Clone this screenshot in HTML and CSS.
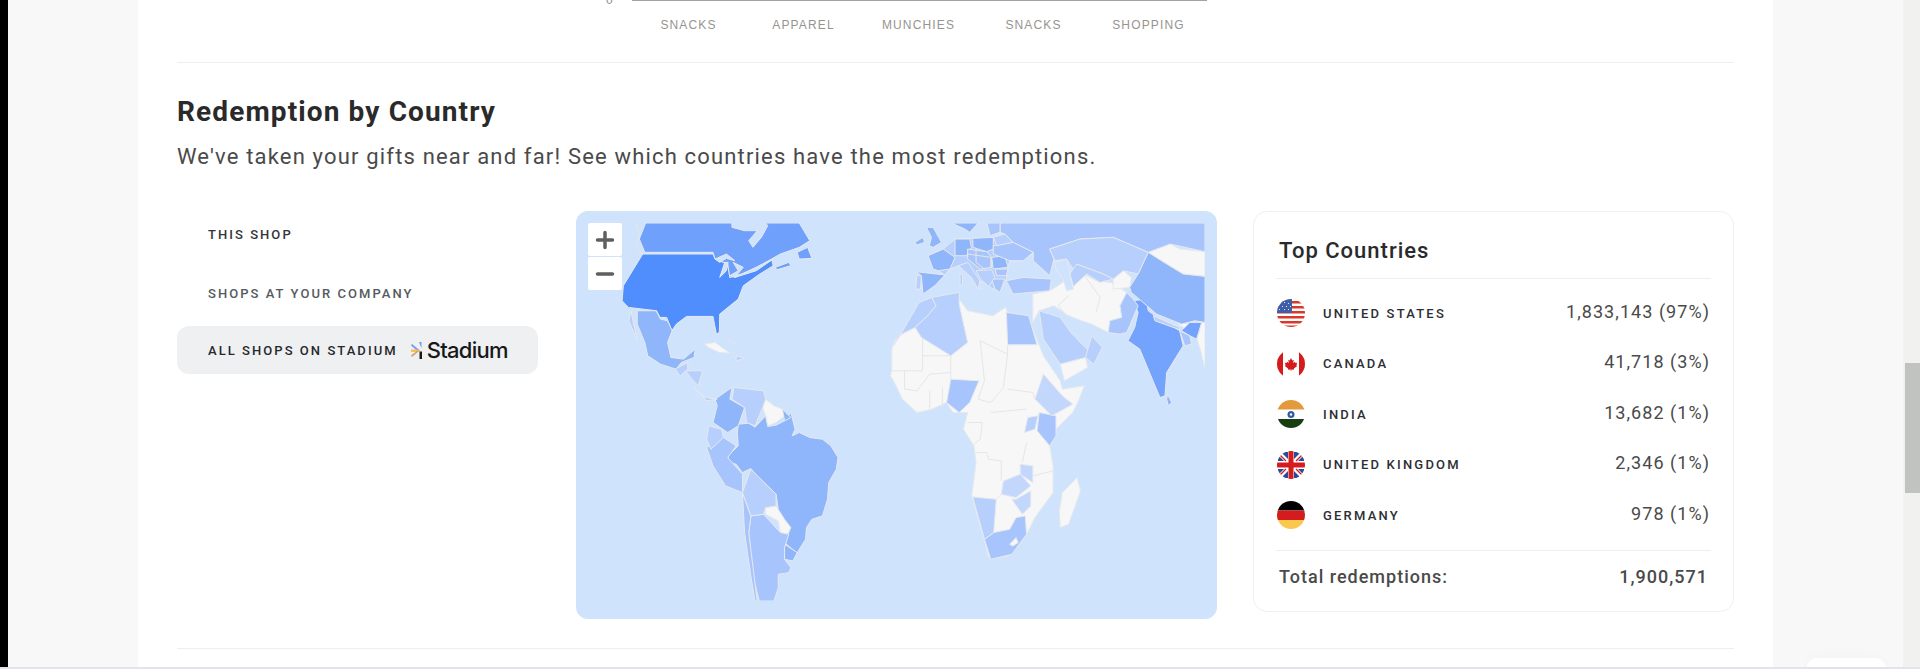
FILE: index.html
```html
<!DOCTYPE html>
<html lang="en">
<head>
<meta charset="utf-8">
<title>Redemption by Country</title>
<link rel="stylesheet" href="styles.css">
</head>
<body>
<div class="edge"></div>
<div class="gutter-left"></div>
<main class="card">
  <section class="chart">
    <div class="axis-row"><span class="zero">0</span><div class="axis"></div></div>
    <div class="ticks"><span>SNACKS</span><span>APPAREL</span><span>MUNCHIES</span><span>SNACKS</span><span>SHOPPING</span></div>
  </section>
  <section class="country">
    <h2 class="title">Redemption by Country</h2>
    <p class="sub">We've taken your gifts near and far! See which countries have the most redemptions.</p>
    <div class="cols">
      <nav class="tabs">
        <div class="tab tab-dark">THIS SHOP</div>
        <div class="tab">SHOPS AT YOUR COMPANY</div>
        <div class="tab tab-active"><span>ALL SHOPS ON STADIUM</span>
          <span class="logo"><svg class="logo-mark" viewBox="0 0 11 17"><path d="M8 0h2.500v6.500z" fill="#6f9cf5"/><path d="M1 2l8 6.500-1.600 1.200L0 3.500z" fill="#6f9cf5"/><path d="M0 7.500h8.500v2.400H0z" fill="#f4bd55"/><path d="M7.500 9.500L1 15l-1-1.500 6.500-5z" fill="#d99a72"/><path d="M8.500 9.500H11V17H8.500z" fill="#1a1a1a"/></svg><span class="logo-text">Stadium</span></span>
        </div>
      </nav>
      <div class="map-panel">
        <svg class="map" viewBox="43 72 1466 1133" preserveAspectRatio="none">
          <g class="nd">
            <polygon points="765,450 772,425 790,405 820,385 835,350 870,320 925,300 945,335 1005,350 1035,325 1040,340 1090,360 1100,390 1125,470 1165,545 1170,570 1222,560 1210,600 1195,640 1155,690 1140,740 1148,800 1148,880 1105,955 1085,1005 1040,1070 995,1075 985,1020 975,980 955,890 958,860 965,790 960,740 935,690 945,640 910,640 895,610 860,630 825,640 790,600 775,560 762,530 765,510"/>
            <polygon points="1100,285 1140,275 1160,260 1190,232 1220,225 1250,245 1285,250 1323,280 1307,320 1311,355 1283,365 1279,400 1240,375 1215,365 1185,350 1150,320 1115,335 1100,370"/>
            <polygon points="1291,240 1315,215 1334,235 1330,265 1291,270"/>
            <polygon points="1374,160 1426,135 1450,150 1509,158 1509,232 1457,225 1418,195"/>
            <polygon points="1490,420 1501,370 1509,370 1509,510 1500,460"/>
            <polygon points="1165,495 1225,475 1230,505 1175,545"/>
            <polygon points="465,600 485,620 505,630 510,650 490,670 470,680 465,650 458,625"/>
            <polygon points="465,925 490,920 510,960 525,985 520,1005 500,1000 495,965 465,945"/>
            <polygon points="1205,835 1213,875 1185,975 1165,985 1163,935 1170,880"/>
            <polygon points="320,435 345,430 380,462 355,460 330,445"/>
            <polygon points="1443,375 1470,372 1462,388"/>
          </g>
          <g class="lines">
            <polyline points="765,515 838,515 838,390"/>
            <polyline points="838,470 905,470 905,540"/>
            <polyline points="975,425 1040,465 1040,440"/>
            <polyline points="975,425 985,545 970,600 1000,610 1030,565 1040,465"/>
            <polyline points="1040,570 1100,580 1105,600"/>
            <polyline points="1000,640 1085,630"/>
            <polyline points="945,670 980,670 975,720 955,740"/>
            <polyline points="960,760 990,760 995,780 1025,785 1025,845"/>
            <polyline points="795,515 795,570 825,575 855,525 905,520"/>
            <polyline points="855,575 855,635"/>
            <polyline points="885,565 885,620"/>
            <polyline points="1085,730 1075,790"/>
            <polyline points="1100,830 1148,815"/>
            <polyline points="1013,900 1025,885"/>
            <polyline points="1180,350 1160,320 1185,290"/>
            <polyline points="1220,225 1260,295 1250,340"/>
          </g>
          <polygon class="c-lt" points="851,170 887,150 915,120 1006,115 1053,130 1101,160 1077,185 1045,185 1041,205 1037,240 1022,280 1000,265 975,245 974,270 954,235 923,200 903,210 891,228 875,215"/>
          <polygon class="c-us" points="173,165 127,260 124,305 139,325 206,335 214,355 230,355 242,395 253,375 277,352 340,352 348,405 355,400 356,345 400,300 412,260 451,225 483,200 479,180 443,205 408,225 380,235 375,195 345,180 340,165"/>
          <g class="c-ca">
            <polygon points="180,72 385,72 385,85 415,95 445,95 425,125 435,145 455,115 470,80 465,72 545,72 570,125 545,145 500,165 479,180 443,205 408,225 380,235 375,195 345,180 340,160 178,160 165,120"/>
            <polygon points="540,160 565,145 575,178 545,180"/>
            <polygon points="488,205 520,190 525,200 492,212"/>
          </g>
          <g class="c-in">
            <polygon points="1338,305 1370,300 1374,335 1390,350 1449,395 1457,440 1418,520 1414,590 1402,595 1354,450 1326,425 1342,385 1350,340"/>
            <polygon points="1473,370 1501,370 1489,420 1473,410 1453,395"/>
          </g>
          <g class="c-br">
            <polygon points="400,675 425,672 440,684 465,650 470,682 490,678 510,665 525,640 535,690 528,710 545,700 570,715 600,720 620,740 637,775 633,810 615,850 612,900 600,950 575,960 562,985 560,1020 545,1050 540,1062 510,1030 525,985 510,960 495,930 490,885 470,860 450,840 430,808 410,820 395,795 378,790 375,770 400,740 398,700"/>
            <polygon points="385,565 380,600 415,625 400,680 375,700 340,670 350,620 345,600"/>
            <polygon points="505,630 525,655 510,665"/>
            <polygon points="160,335 205,335 215,360 232,365 243,395 232,430 240,475 270,480 298,450 295,475 265,490 252,510 215,495 185,470 178,430 160,375"/>
            <polygon points="1374,160 1418,195 1457,225 1509,232 1509,370 1485,365 1453,375 1394,345 1334,280 1330,265 1350,225"/>
            <polygon points="510,1035 540,1060 530,1085 510,1080"/>
            <polygon points="1420,585 1430,610 1422,620 1418,600"/>
            <polygon points="847,85 863,85 883,130 863,145 854,140 859,115"/>
            <polygon points="851,170 887,150 915,175 903,210 875,215 863,210"/>
            <polygon points="915,120 950,120 954,145 942,170 915,170"/>
            <polygon points="957,118 1006,115 1006,150 990,158 958,145"/>
            <polygon points="824,218 891,228 867,260 839,285 835,230"/>
            <polygon points="1002,175 1033,170 1041,205 1006,210"/>
            <polygon points="820,130 839,115 843,130 824,138"/>
            <polygon points="907,72 970,72 950,100 938,90"/>
          </g>
          <g class="c-mid">
            <polygon points="1022,72 1509,72 1509,158 1426,135 1374,160 1291,115 1212,120 1140,150 1150,180 1140,230 1101,185 1101,160 1053,130 1033,105 1022,100"/>
            <polygon points="1037,245 1077,235 1144,240 1140,275 1053,285"/>
            <polygon points="325,745 365,715 395,740 375,775 410,825 410,880 370,860 340,800"/>
            <polygon points="430,950 460,945 500,1000 520,1005 510,1045 510,1080 525,1105 520,1120 495,1125 495,1165 485,1205 450,1205 435,1130 425,1000"/>
            <polygon points="410,880 430,950 425,1000 445,1205 440,1205 430,1130 415,1000"/>
            <polygon points="1007,1000 1045,990 1060,955 1082,950 1085,1005 1050,1065 1000,1080 985,1020"/>
            <polygon points="1323,280 1338,300 1350,320 1330,380 1323,400 1307,405 1279,400 1283,365 1311,355 1307,320"/>
            <polygon points="1037,340 1090,350 1110,437 1040,437"/>
            <polygon points="905,540 972,545 950,610 925,640 895,610"/>
            <polygon points="1115,640 1155,650 1155,710 1140,740 1110,695"/>
            <polygon points="1449,395 1473,410 1477,435 1461,440"/>
            <polygon points="1006,140 1053,130 1101,160 1077,185 1045,185 1006,165"/>
            <polygon points="1010,210 1041,210 1037,230 1014,230"/>
            <polygon points="945,150 990,158 1002,175 1002,205 975,210 945,180"/>
            <polygon points="1002,240 1033,240 1022,280 1010,270"/>
            <polygon points="991,72 1022,72 1022,100 998,110"/>
          </g>
          <g class="c-lt">
            <polygon points="390,565 460,575 465,600 458,625 440,680 420,670 415,625 385,600"/>
            <polygon points="330,680 360,690 365,715 335,750 325,720"/>
            <polygon points="430,810 470,860 490,885 490,920 465,925 460,945 430,950 410,880"/>
            <polygon points="770,440 830,310 860,295 870,320 850,350 820,385 780,410"/>
            <polygon points="820,385 850,350 870,320 860,295 925,280 925,315 945,430 905,470 835,415"/>
            <polygon points="1115,335 1165,355 1190,400 1240,465 1225,475 1165,495 1125,420"/>
            <polygon points="1240,410 1265,445 1245,495 1225,475"/>
            <polygon points="1088,655 1112,650 1105,690 1080,700"/>
            <polygon points="957,893 1013,900 1007,1000 985,1020"/>
            <polygon points="1140,150 1212,120 1291,115 1374,160 1350,225 1315,215 1291,240 1267,225 1204,195 1204,225 1180,180 1152,185"/>
            <polygon points="1188,225 1204,195 1267,225 1291,240 1259,250 1228,225 1196,262"/>
            <polygon points="1386,350 1449,385 1449,392 1390,365"/>
            <polygon points="923,200 946,190 974,245 970,270 954,235"/>
            <polygon points="1006,115 1033,105 1053,130 1014,140"/>
            <polygon points="1002,212 1010,235 995,262 975,240 965,215"/>
            <polygon points="250,510 280,490 280,510 262,530"/>
            <polygon points="275,515 315,515 305,560 290,540"/>
            <polygon points="295,565 320,595 350,600 325,605"/>
            <polygon points="395,470 415,478 395,485"/>
            <polygon points="145,335 160,425 140,365"/>
            <polygon points="824,230 835,230 833,270 822,270"/>
            <polygon points="927,225 933,225 933,258 927,258"/>
          </g>
          <g class="c-pale">
            <polygon points="1125,525 1170,590 1195,615 1145,650 1105,600"/>
            <polygon points="1030,845 1070,825 1095,860 1060,895 1025,885"/>
            <polygon points="1070,795 1100,800 1100,850 1070,825"/>
            <polygon points="1060,900 1095,875 1095,920 1075,945 1050,900"/>
          </g>
          <g class="water">
            <polygon points="345,180 372,165 392,185 372,178 356,190"/>
            <polygon points="368,190 356,235 372,215 376,190"/>
            <polygon points="388,190 412,205 392,235 380,230 400,215"/>
            <polygon points="392,235 443,205 483,180 443,215"/>
            <polygon points="1152,190 1180,180 1184,200 1196,270 1180,275 1172,240 1156,215"/>
          </g>
          <polygon class="nd" points="1045,1035 1060,1015 1065,1030 1052,1040"/>
          <g class="lines">
            <polyline points="365,405 385,430 400,440"/>
            <polyline points="155,72 165,105 158,145 172,165"/>
            <polyline points="945,165 1000,175 1000,205"/>
            <polyline points="965,150 965,190 985,210"/>
          </g>
        </svg>
        <div class="zoom-ctl">
          <button class="zoom-btn" type="button"><svg viewBox="0 0 20 20"><path d="M10 2.500v15M2.500 10h15"/></svg></button>
          <button class="zoom-btn" type="button"><svg viewBox="0 0 20 20"><path d="M2.500 10h15"/></svg></button>
        </div>
      </div>
      <aside class="top">
        <h3 class="top-title">Top Countries</h3>
        <ul class="rows">
          <li class="row"><svg class="flag" viewBox="0 0 28 28"><defs><clipPath id="fc"><circle cx="14" cy="14" r="14"/></clipPath></defs><g clip-path="url(#fc)"><rect width="28" height="28" fill="#fff"/><path d="M0 2h28v2.400H0zM0 7h28v2.400H0zM0 12h28v2.400H0zM0 17h28v2.400H0zM0 22h28v2.400H0zM0 26.500h28v2H0z" fill="#d9392b"/><rect width="15" height="14" fill="#3f5ea8"/><path d="M3 4h1v1H3zM7 3h1v1H7zM11 4h1v1h-1zM5 7h1v1H5zM9 7h1v1H9zM13 7h1v1h-1zM2 10h1v1H2zM7 10h1v1H7zM11 10h1v1h-1z" fill="#dfe6f5"/></g></svg><span class="name">UNITED STATES</span><span class="val">1,833,143 (97%)</span></li>
          <li class="row"><svg class="flag" viewBox="0 0 28 28"><g clip-path="url(#fc)"><rect width="28" height="28" fill="#fff"/><rect width="6" height="28" fill="#d41c1c"/><rect x="22" width="6" height="28" fill="#d41c1c"/><path d="M14 8l1.300 2.500 1.500-.8-.7 3.300 1.800-1.300.6 1.400 1.700-.3-.8 2.600.8.600-3.200 2.500-.2 1.300-2.500-.4V21h-.6v-1.600l-2.500.4-.2-1.300-3.200-2.500.8-.6-.8-2.600 1.700.3.600-1.400 1.800 1.300-.7-3.300 1.500.8z" fill="#d41c1c"/></g></svg><span class="name">CANADA</span><span class="val">41,718 (3%)</span></li>
          <li class="row"><svg class="flag" viewBox="0 0 28 28"><g clip-path="url(#fc)"><rect width="28" height="28" fill="#fff"/><rect width="28" height="9.500" fill="#e39a3c"/><rect y="19" width="28" height="9" fill="#173f12"/><circle cx="14" cy="14.500" r="3.500" fill="#2f5c9f"/><circle cx="14" cy="14.500" r="1.200" fill="#fff"/></g></svg><span class="name">INDIA</span><span class="val">13,682 (1%)</span></li>
          <li class="row"><svg class="flag" viewBox="0 0 28 28"><g clip-path="url(#fc)"><rect width="28" height="28" fill="#fff"/><path d="M4 1h7v7zM17 1h7l-7 7zM1 18l0 6 6-6zM21 18l6 6v-6zM4 27l7-7v7zM24 27l-7-7v7zM1 10V4l6 6zM27 10V4l-6 6z" fill="#2b4a9b"/><path d="M0 1l9 9M28 1l-9 9M0 27l9-9M28 27l-9-9" stroke="#d41c1c" stroke-width="1.300"/><rect x="11.500" width="5" height="28" fill="#d41c1c"/><rect y="11.500" width="28" height="5" fill="#d41c1c"/></g></svg><span class="name">UNITED KINGDOM</span><span class="val">2,346 (1%)</span></li>
          <li class="row"><svg class="flag" viewBox="0 0 28 28"><g clip-path="url(#fc)"><rect width="28" height="9.500" fill="#000"/><rect y="9.500" width="28" height="9.500" fill="#d41c1c"/><rect y="19" width="28" height="9" fill="#fac84f"/></g></svg><span class="name">GERMANY</span><span class="val">978 (1%)</span></li>
        </ul>
        <div class="total"><span>Total redemptions:</span><span>1,900,571</span></div>
      </aside>
    </div>
  </section>
</main>
<div class="gutter-right"></div>
<div class="track"><div class="thumb"></div></div>
<div class="foot-line"></div>
<div class="foot-tab"></div>
</body>
</html>
```

FILE: styles.css
```css
* { box-sizing: border-box; }
html, body { margin: 0; height: 669px; overflow: hidden; }
body {
  display: flex;
  background: #f8f8f8;
  font-family: Roboto, "Liberation Sans", sans-serif;
  color: #2b2b2b;
}
.edge { width: 8px; background: #000; flex: none; }
.gutter-left { width: 130px; flex: none; }
.gutter-right { width: 130px; flex: none; }
.card { width: 1635px; flex: none; background: #fff; padding: 0 39px; }

.chart { height: 63px; border-bottom: 1px solid #eeeeee; }
.axis-row { display: flex; height: 1px; padding-left: 429px; align-items: flex-start; }
.zero {
  width: 26px; height: 1px; font: 12px/0 "Liberation Sans", sans-serif;
  color: #8d8d8d;
}
.axis { width: 575px; height: 1px; background: #a89f9f; }
.ticks {
  display: grid; grid-template-columns: repeat(5, 115px); margin: 17px 0 0 454px;
  font: 12px/14px "Liberation Sans", sans-serif; letter-spacing: 1.15px; color: #979490; text-align: center;
}

.country { height: 586px; border-bottom: 1px solid #eeeeee; }
.title { margin: 0; padding-top: 33px; font-size: 28px; line-height: 32px; font-weight: 700; letter-spacing: 1.12px; color: #2a2a2a; }
.sub { margin: 14px 0 0; font-size: 22px; line-height: 30px; letter-spacing: 1.17px; color: #4a4a4a; }
.cols { display: flex; margin-top: 39px; align-items: flex-start; }

.tabs { width: 361px; flex: none; margin-right: 38px; display: flex; flex-direction: column; }
.tab {
  display: flex; align-items: center; height: 48px; margin-bottom: 9px; padding-left: 31px;
  font-size: 13px; font-weight: 500; letter-spacing: 2.05px; color: #555a60;
}
.tab-dark { height: 46px; margin-bottom: 12px; color: #33353a; }
.tab-active { color: #26282c; background: #eff0f2; border-radius: 12px; margin: 0; gap: 13px; }
.logo { display: flex; align-items: center; gap: 5px; }
.logo-mark { width: 11px; height: 17px; }
.logo-text { font: 500 22px/24px Inter, sans-serif; letter-spacing: -.7px; color: #16191a; }

.map-panel {
  position: relative; width: 641px; height: 408px; flex: none; margin-right: 36px;
  padding: 12px 12px 18px; background: #cfe3fd; border-radius: 12px;
}
.map { display: block; width: 617px; height: 378px; }
.map polygon, .map polyline { vector-effect: non-scaling-stroke; stroke: #e6e9ee; stroke-width: 1; stroke-linejoin: round; }
.nd { fill: #f7f7f7; }
.lines { fill: none; }
.map .lines polyline { stroke: #e6e6e6; }
.c-us { fill: #518efd; }
.c-ca { fill: #6fa1fc; }
.c-in { fill: #74a3fd; }
.c-br { fill: #8fb6fb; }
.c-mid { fill: #a7c5fc; }
.c-lt { fill: #b7cffc; }
.c-pale { fill: #c3d6fc; }
.water { fill: #cfe3fd; }

.zoom-ctl { position: absolute; left: 12px; top: 12px; display: flex; flex-direction: column; gap: 1px; }
.zoom-btn {
  width: 34px; height: 33px; padding: 7px; border: 0; border-radius: 2px; background: #fff; display: block;
}
.zoom-btn svg { display: block; width: 20px; height: 20px; }
.zoom-btn path { fill: none; stroke: #5f5f5f; stroke-width: 3.5; stroke-linecap: round; }

.top {
  width: 481px; height: 401px; flex: none; padding: 0 22px; background: #fff;
  border: 1px solid #f0f0f0; border-radius: 14px;
}
.top-title {
  margin: 0; height: 67px; padding: 24px 0 0 3px; border-bottom: 1px solid #eeeeee;
  font-size: 22px; line-height: 30px; font-weight: 500; letter-spacing: 1px; color: #2a2a2a;
}
.rows { list-style: none; margin: 0; padding: 9px 0 0; height: 272px; border-bottom: 1px solid #eeeeee; }
.row { display: flex; align-items: center; height: 50.500px; padding-left: 1px; }
.flag { width: 28px; height: 28px; flex: none; }
.name { margin-left: 18px; font-size: 13px; font-weight: 500; letter-spacing: 2.2px; color: #2c2e33; }
.val { margin-left: auto; margin-right: 1px; padding-bottom: 4px; font-size: 18px; color: #4a4a4a; letter-spacing: 1.05px; }
.total {
  display: flex; justify-content: space-between; padding: 13px 3px 0 3px;
  font-size: 18px; line-height: 26px; font-weight: 500; color: #4a4a4a; letter-spacing: 1px;
}

.track { width: 17px; flex: none; background: #f1f1f0; padding-left: 2px; }
.thumb { margin-top: 363px; height: 130px; background: #c1c3c0; }
.foot-line { position: absolute; left: 0; right: 0; top: 667px; height: 2px; background: #e2e4ec; }
.foot-tab {
  position: absolute; left: 1807px; top: 658px; width: 78px; height: 9px; background: #fff;
  border-radius: 10px 10px 0 0; box-shadow: 0 0 16px rgba(0,0,0,.03);
}
```
